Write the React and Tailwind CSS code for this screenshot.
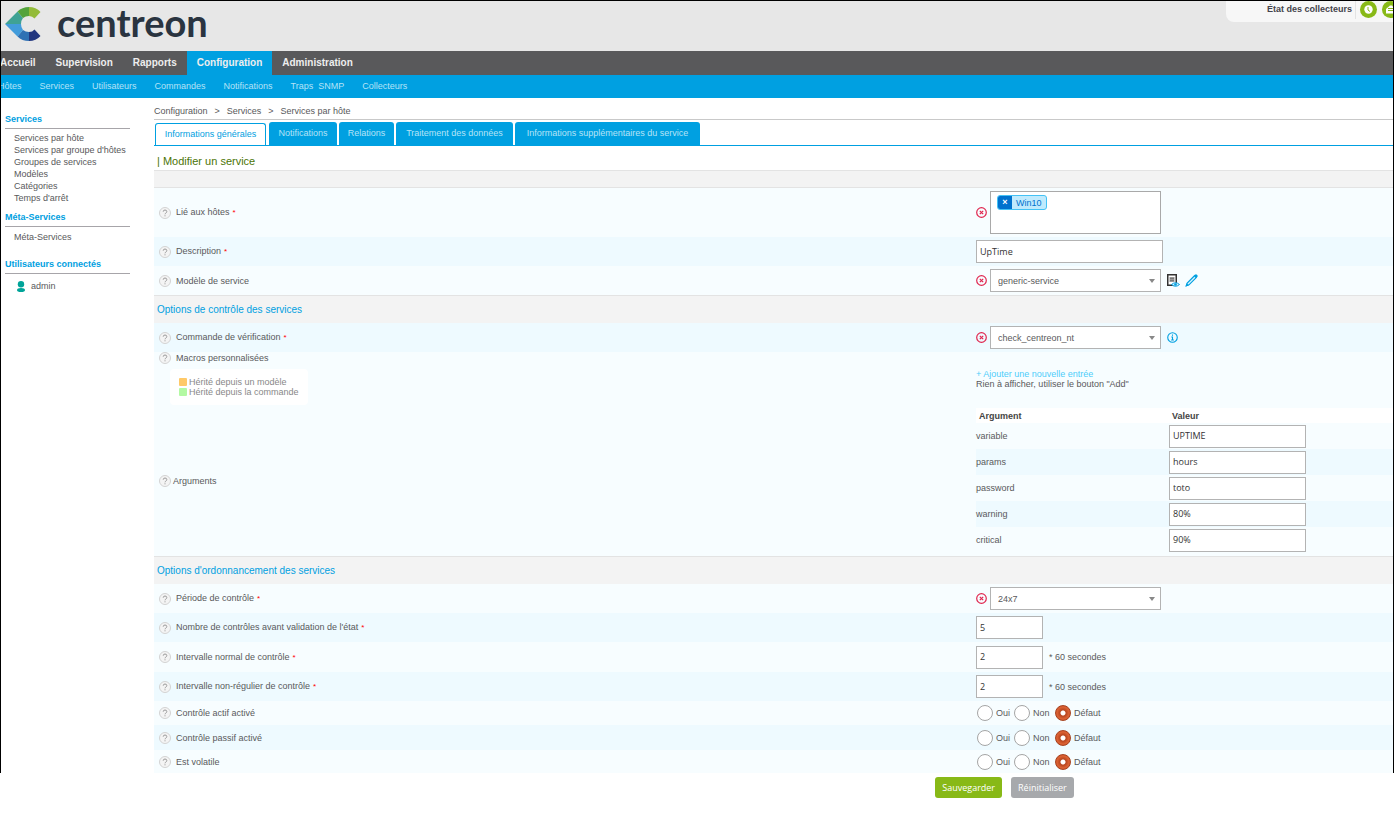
import React from 'react';

const subMenu = ['Hôtes', 'Services', 'Utilisateurs', 'Commandes', 'Notifications', 'Traps\u00a0 SNMP', 'Collecteurs'];
const mainMenu = ['Accueil', 'Supervision', 'Rapports', 'Configuration', 'Administration'];

const sideMenu = [
  "Services par hôte",
  "Services par groupe d'hôtes",
  'Groupes de services',
  'Modèles',
  'Catégories',
  "Temps d'arrêt",
];

const tabs = [
  ['Notifications', 'w-[68px]'],
  ['Relations', 'w-[55px]'],
  ['Traitement des données', 'w-[117px]'],
  ['Informations supplémentaires du service', 'w-[185px]'],
];

const macroArgs = [
  ['variable', 'UPTIME'],
  ['params', 'hours'],
  ['password', 'toto'],
  ['warning', '80%'],
  ['critical', '90%'],
];

const Logo = () => (
  <a href="#" className="flex items-start gap-4 pl-1">
    <svg className="mt-[6px]" width="36" height="34" viewBox="0 0 36 34" aria-hidden="true">
      <path d="M0 17L12.500 4.500L18 11Q16 13.500 16 17z" fill="#3fa294" />
      <path d="M12.500 4.500Q17 0 24 0V9Q20.500 9 18 11z" fill="#53a33c" />
      <path d="M24 0Q31 0 35.500 5L29.500 11.500Q27.500 9 24 9z" fill="#93bb39" />
      <path d="M0 17H16Q16 20.500 18 23L12.500 29.500z" fill="#429cdb" />
      <path d="M12.500 29.500L18 23Q20.500 25 24 25V34Q17 34 12.500 29.500z" fill="#2f71b4" />
      <path d="M24 34Q31 34 35.500 29L29.500 22.500Q27.500 25 24 25z" fill="#22367f" />
    </svg>
    <span className="font-[Lato,sans-serif] text-[38px] leading-[42px] font-bold text-[#2a3440]">centreon</span>
  </a>
);

const Header = () => (
  <header>
    <div className="flex h-[50px] items-start justify-between bg-[#e7e7e7]">
      <Logo />
      <div className="flex h-[21px] w-[167px] items-start justify-end overflow-hidden rounded-bl-lg bg-[#f7f7f7]">
        <span className="px-[3px] leading-4 font-bold text-[#43434b]">État des collecteurs</span>
        <span className="mr-1 h-[18px] border-l border-[#e3e3e3]" />
        <span className="mr-[5px] flex h-[17px] w-[17px] shrink-0 items-center justify-center rounded-full bg-[#88b917]">
          <svg width="9" height="9" viewBox="0 0 9 9" aria-hidden="true">
            <circle cx="4.500" cy="4.500" r="4.200" fill="#fff" />
            <path d="M4 2v3l2 1.500" stroke="#88b917" fill="none" />
          </svg>
        </span>
        <span className="-mr-[6px] flex h-[17px] w-[17px] shrink-0 items-center justify-center rounded-full bg-[#88b917]">
          <svg width="11" height="9" viewBox="0 0 11 9" aria-hidden="true">
            <path d="M1 4l4-3.500h2L10.500 4v4.500h-9.500z" fill="#fff" />
            <path d="M3 3.500h5M3 5.500h5" stroke="#88b917" />
          </svg>
        </span>
      </div>
    </div>
    <nav className="flex h-6 bg-[#59595b] text-[10px] font-bold text-[#eee]">
      <div className="-ml-[11px] flex">
        {mainMenu.map((m) => (
          <a key={m} href="#" className={m === 'Configuration' ? 'bg-[#00a0e1] px-[10px] leading-6' : 'px-[10px] leading-6'}>
            {m}
          </a>
        ))}
      </div>
    </nav>
    <nav className="flex h-[23px] bg-[#00a0e1] leading-[23px] text-[#b5e3f7]">
      <div className="-ml-[12px] flex">
        {subMenu.map((m) => (
          <a key={m} href="#" className="px-[9px]">{m}</a>
        ))}
      </div>
    </nav>
  </header>
);

const SideTitle = ({ children }) => (
  <h3 className="border-b border-[#a7a5a9] leading-[18px] font-bold text-[#00a0e1]">{children}</h3>
);

const Sidebar = () => (
  <aside className="mt-3 ml-1 w-[125px] shrink-0">
    <SideTitle>Services</SideTitle>
    <ul className="mt-[3px] mb-1 pl-[9px] leading-[12px] whitespace-nowrap">
      {sideMenu.map((s) => (
        <li key={s}><a href="#">{s}</a></li>
      ))}
    </ul>
    <SideTitle>Méta-Services</SideTitle>
    <ul className="mt-1 mb-3 pl-[9px] leading-[12px]">
      <li><a href="#">Méta-Services</a></li>
    </ul>
    <SideTitle>Utilisateurs connectés</SideTitle>
    <div className="mt-[6px] flex items-center gap-[6px] pl-3 leading-[12px]">
      <svg width="8" height="11" viewBox="0 0 8 11" aria-hidden="true" fill="#00a499">
        <circle cx="4" cy="3.200" r="3.200" />
        <path d="M0 9 Q0 7 4 7 Q8 7 8 9 Q8 11 4 11 Q0 11 0 9z" />
      </svg>
      <a href="#">admin</a>
    </div>
  </aside>
);

const Help = () => (
  <svg className="shrink-0" width="12" height="12" viewBox="0 0 12 12" aria-hidden="true">
    <circle cx="6" cy="6" r="5.500" fill="#f4f4f4" stroke="#d2d2d2" />
    <path d="M4.200 4.700Q4.300 3 6 3T7.800 4.600Q7.800 5.500 6.800 6.100Q6 6.600 6 7.300M6 8.300v1" fill="none" stroke="#999" />
  </svg>
);

const Clear = () => (
  <button type="button" aria-label="Effacer" className="shrink-0">
    <svg width="11" height="11" viewBox="0 0 11 11" fill="none" stroke="#e0264f">
      <circle cx="5.500" cy="5.500" r="4.800" strokeWidth="1.200" />
      <path d="M3.800 3.800l3.400 3.400M7.200 3.800l-3.400 3.400" strokeWidth="1.200" />
    </svg>
  </button>
);

const Row = ({ label, id, required, odd, height, children }) => (
  <div className={`grid grid-cols-[822fr_417fr] items-center ${height} ${odd ? 'bg-[#eefaff]' : 'bg-[#f7fdff]'}`}>
    <div className="flex items-center gap-[5px] pl-[5px]">
      <Help />
      <label htmlFor={id}>
        {label}
        {required && <span className="ml-[3px] text-[8px] text-[#f00]">*</span>}
      </label>
    </div>
    <div className="flex items-center">{children}</div>
  </div>
);

const Section = ({ children }) => (
  <h4 className="border-t border-[#e3e3e3] bg-[#f3f3f3] pl-[3px] text-[10px] leading-[27px] text-[#00a0e1]">{children}</h4>
);

const SelectBox = ({ id, value }) => (
  <div className="ml-[3px] grid w-[171px] items-center">
    <select
      id={id}
      defaultValue={value}
      className="col-start-1 row-start-1 h-[23px] w-full appearance-none rounded-none border border-[#b3b3b3] bg-white pt-px pl-[7px]"
    >
      <option>{value}</option>
    </select>
    <svg className="pointer-events-none col-start-1 row-start-1 mr-[6px] justify-self-end" width="6" height="4" viewBox="0 0 6 4" aria-hidden="true">
      <path d="M0 0h6L3 4z" fill="#888" />
    </svg>
  </div>
);

const inputStyle =
  "h-[23px] border border-[#b3b3b3] bg-white px-[3px] pb-px font-['Open_Sans','Noto_Sans',sans-serif] text-[#333]";

const Radios = ({ name }) => (
  <div className="flex items-center pl-px" role="radiogroup" aria-label={name}>
    {[['Oui', 'w-[37px]'], ['Non', 'w-[41px]'], ['Défaut', 'w-[50px]']].map(([text, width]) => (
      <label key={text} className={`flex items-center gap-[3px] ${width}`}>
        <input
          type="radio"
          name={name}
          defaultChecked={text === 'Défaut'}
          className="h-4 w-4 shrink-0 appearance-none rounded-full border border-[#a5a5a5] bg-white checked:border-[#a6421f] checked:bg-[radial-gradient(circle,#fff_0_2px,#b8451e_3px,#dc6233_6px,#c9502a_8px)]"
        />
        {text}
      </label>
    ))}
  </div>
);

const ServiceForm = () => (
  <form>
    <div className="h-[18px] border-y border-[#e3e3e3] bg-[#f3f3f3]" />
    <Row label="Lié aux hôtes" required height="h-[49px]">
      <Clear />
      <div className="ml-[3px] h-[43px] w-[171px] border border-[#a9a9a9] bg-white px-[6px] py-[3px]">
        <span className="inline-flex h-[15px] items-center overflow-hidden rounded-[3px] border border-[#43c2f5] bg-[#bfeafd] text-[#0072ce]">
          <button type="button" aria-label="Retirer Win10" className="h-[15px] w-[14px] bg-[#0072ce] text-[9px] leading-[13px] font-bold text-white">×</button>
          <span className="px-1">Win10</span>
        </span>
      </div>
    </Row>
    <Row label="Description" id="description" required odd height="h-[29px]">
      <input id="description" defaultValue="UpTime" className={`w-[187px] ${inputStyle}`} />
    </Row>
    <Row label="Modèle de service" id="template" height="h-[29px]">
      <Clear />
      <SelectBox id="template" value="generic-service" />
      <button type="button" aria-label="Voir le modèle" className="ml-[6px]">
        <svg width="13" height="13" viewBox="0 0 13 13" fill="none">
          <path d="M0.750 0.750h8.500v10.500h-8.500z" fill="#fff" stroke="#333" strokeWidth="1.500" />
          <path d="M2.500 3h5v5h-5z" fill="#999" />
          <path d="M3 4.500h4M3 6.500h4" stroke="#777" />
          <path d="M4.500 10.500Q8.500 7 12.500 10.500Q8.500 14 4.500 10.500z" fill="#d9f2fc" stroke="#00a0e1" />
          <circle cx="8.500" cy="10.500" r="1.300" fill="#00a0e1" />
        </svg>
      </button>
      <button type="button" aria-label="Modifier le modèle" className="ml-[5px]">
        <svg width="13" height="13" viewBox="0 0 13 13" fill="none">
          <path d="M1.300 11.700L2.200 9L9.500 1.800Q10.500 0.800 11.600 1.600Q12.200 2.600 11.200 3.600L4 10.800z" fill="#d9f2fc" stroke="#00a0e1" strokeWidth="1.200" />
          <path d="M9 2.300l1.500-1.500Q11.500 0.300 12.300 1Q12.800 2 12.200 2.700L10.700 4.100z" fill="#00a0e1" />
          <path d="M0.500 12.500l1.200-3.300 2.200 2.200z" fill="#00a0e1" />
        </svg>
      </button>
    </Row>
    <Section>Options de contrôle des services</Section>
    <Row label="Commande de vérification" id="command" required odd height="h-[29px]">
      <Clear />
      <SelectBox id="command" value="check_centreon_nt" />
      <button type="button" aria-label="Informations" className="ml-[6px]">
        <svg width="11" height="11" viewBox="0 0 12 12" fill="none" stroke="#00a0e1">
          <circle cx="6" cy="6" r="5.200" strokeWidth="1.200" />
          <path d="M6 2.600v1.400M4.700 5.500H6v3M4.500 8.700h3" strokeWidth="1.200" />
        </svg>
      </button>
    </Row>
    <div className="grid h-[53px] grid-cols-[822fr_417fr] bg-[#f7fdff]">
      <div className="pl-[5px]">
        <div className="flex h-3 items-center gap-[5px]">
          <Help />
          <span>Macros personnalisées</span>
        </div>
        <div className="mt-[5px] ml-[11px] inline-block rounded bg-white px-[9px] py-2 leading-[10px] text-[#888]">
          <div className="flex items-center gap-[2px]">
            <span className="h-2 w-2 rounded-[1px] bg-[#ffc968]" />
            Hérité depuis un modèle
          </div>
          <div className="flex items-center gap-[2px]">
            <span className="h-2 w-2 rounded-[1px] bg-[#b3f9a3]" />
            Hérité depuis la commande
          </div>
        </div>
      </div>
      <div className="pt-[17px] leading-[10px]">
        <a href="#" className="block text-[#4fcdfa]">+ Ajouter une nouvelle entrée</a>
        <p>Rien à afficher, utiliser le bouton "Add"</p>
      </div>
    </div>
    <div className="grid grid-cols-[822fr_417fr] bg-[#f7fdff] pt-[3px] pb-[3px]">
      <div className="flex items-center gap-[2px] pl-[5px]">
        <Help />
        <span>Arguments</span>
      </div>
      <table className="w-full border-collapse text-left">
        <thead>
          <tr className="h-[15px] bg-white text-[#444]">
            <th className="w-[193px] pl-[3px]">Argument</th>
            <th className="pl-[3px]">Valeur</th>
          </tr>
        </thead>
        <tbody>
          {macroArgs.map(([name, value], i) => (
            <tr key={name} className={i % 2 ? 'h-[26px] bg-[#eefaff]' : 'h-[26px]'}>
              <td><label htmlFor={name}>{name}</label></td>
              <td><input id={name} defaultValue={value} className={`block w-[137px] ${inputStyle}`} /></td>
            </tr>
          ))}
        </tbody>
      </table>
    </div>
    <Section>Options d'ordonnancement des services</Section>
    <Row label="Période de contrôle" id="period" required height="h-[29px]">
      <Clear />
      <SelectBox id="period" value="24x7" />
    </Row>
    <Row label="Nombre de contrôles avant validation de l'état" id="attempts" required odd height="h-[29px]">
      <input id="attempts" defaultValue="5" className={`w-[67px] ${inputStyle}`} />
    </Row>
    <Row label="Intervalle normal de contrôle" id="normal" required height="h-[30px]">
      <input id="normal" defaultValue="2" className={`w-[67px] ${inputStyle}`} />
      <span className="ml-[6px]">* 60 secondes</span>
    </Row>
    <Row label="Intervalle non-régulier de contrôle" id="retry" required odd height="h-[29px]">
      <input id="retry" defaultValue="2" className={`w-[67px] ${inputStyle}`} />
      <span className="ml-[6px]">* 60 secondes</span>
    </Row>
    <Row label="Contrôle actif activé" height="h-[24px]"><Radios name="active" /></Row>
    <Row label="Contrôle passif activé" odd height="h-[25px]"><Radios name="passive" /></Row>
    <Row label="Est volatile" height="h-[23px]"><Radios name="volatile" /></Row>
  </form>
);

export default function App() {
  return (
    <div className="min-h-screen bg-white font-['Liberation_Sans',Arial,sans-serif] text-[9px] leading-[12px] text-[#59595b]">
      <div className="overflow-hidden border-x border-t border-black">
        <Header />
        <div className="flex">
          <Sidebar />
          <main className="ml-6 min-w-0 flex-1">
            <div className="mt-[5px] border-b border-[#c9c9c9] leading-4">
              <a href="#">Configuration</a>
              <span className="mx-[7px]">&gt;</span>
              <a href="#">Services</a>
              <span className="mx-[7px]">&gt;</span>
              <a href="#">Services par hôte</a>
            </div>
            <div className="mt-[2px] flex h-6 items-end gap-[2px] border-b border-[#00a0e1] pl-px whitespace-nowrap">
              <button type="button" className="mr-px h-[22px] w-[111px] rounded-t-[3px] border border-b-0 border-[#00a0e1] pb-px text-[#00a0e1]">
                Informations générales
              </button>
              {tabs.map(([t, width]) => (
                <button key={t} type="button" className={`h-[23px] rounded-t-[3px] bg-[#00a0e1] pb-[2px] text-[#b5e3f7] ${width}`}>
                  {t}
                </button>
              ))}
            </div>
            <h2 className="pt-[7px] pb-px pl-[3px] text-[11px] leading-4 text-[#4b7405]">| Modifier un service</h2>
            <ServiceForm />
          </main>
        </div>
      </div>
      <div className="flex justify-center gap-[9px] pt-1 pl-[615px] font-['Open_Sans','Noto_Sans',sans-serif] text-white">
        <button type="button" className="h-[21px] rounded-[3px] bg-[#88b917] px-[7px]">Sauvegarder</button>
        <button type="button" className="h-[21px] rounded-[3px] bg-[#a7a9ac] px-[7px]">Réinitialiser</button>
      </div>
    </div>
  );
}
